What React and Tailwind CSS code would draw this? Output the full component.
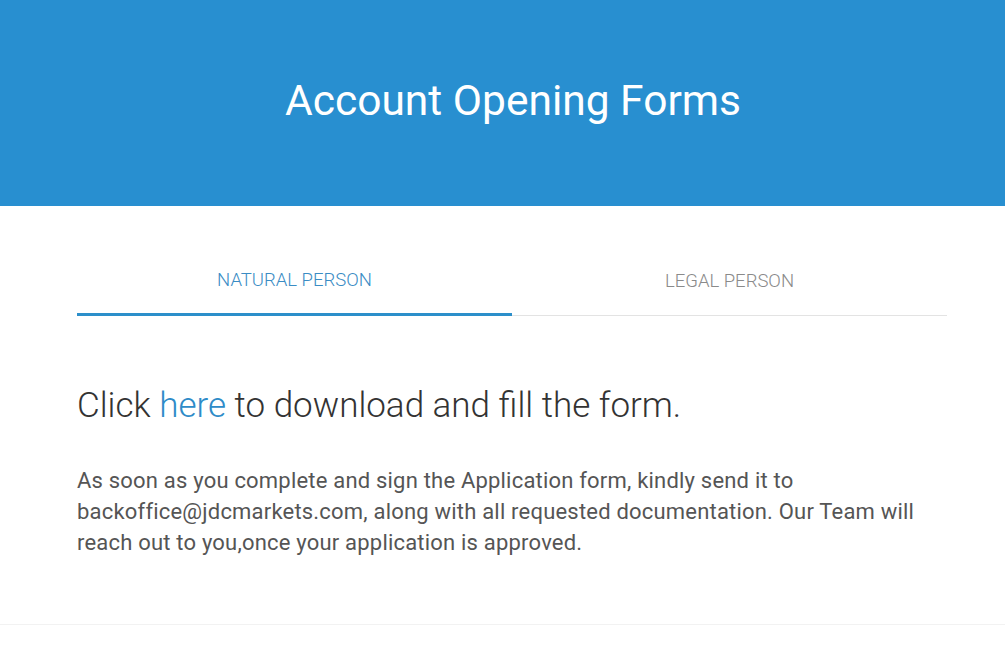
export default function App() {
  return (
    <div className="min-h-screen bg-white" style={{ fontFamily: "Roboto, 'Liberation Sans', sans-serif" }}>
      {/* Header */}
      <div className="h-[206px] bg-[#288fd0] flex items-center justify-center pl-[21px]">
        <h1 className="text-[42.5px] font-normal text-white leading-none -mt-[4px]">Account Opening Forms</h1>
      </div>

      {/* Content */}
      <div className="ml-[77px] mr-[58px] pt-[39px] pb-[66px]">
        {/* Tabs */}
        <div className="flex">
          <div className="flex-1 h-[71px] flex items-center justify-center border-b-[3px] border-[#2c8fca] text-[18.5px] font-light text-[#3a8cc4] uppercase pt-[4px]">
            Natural Person
          </div>
          <div className="flex-1 h-[71px] flex items-center justify-center border-b border-[#e3e3e3] text-[18.5px] font-light text-[#8a8a8a] uppercase pt-[3px]">
            Legal Person
          </div>
        </div>

        <h2 className="mt-[70px] text-[35px] font-light leading-[40px] text-[#333333]">
          Click <a className="text-[#2e8bc8]">here</a> to download and fill the form.
        </h2>

        <p className="mt-[39px] text-[22px] font-normal leading-[31px] text-[#555555] tracking-[0.2px]">
          As soon as you complete and sign the Application form, kindly send it to
          <br />
          backoffice@jdcmarkets.com, along with all requested documentation. Our Team will
          <br />
          reach out to you,once your application is approved.
        </p>
      </div>

      <div className="border-t border-[#f2f2f2] h-[30px]"></div>
    </div>
  );
}
